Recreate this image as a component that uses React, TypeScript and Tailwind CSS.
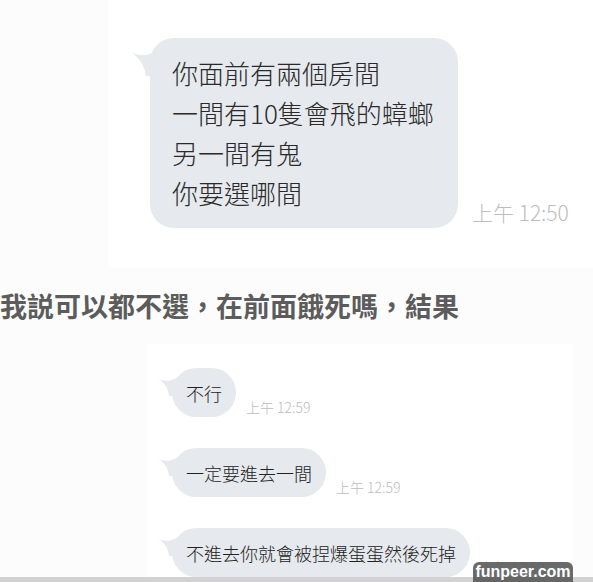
import React from 'react';

const cjk = "font-['Noto_Sans_CJK_TC','Noto_Sans_CJK_SC',sans-serif]";

// 對話框左上角的小尾巴
const Tail = ({ className = '' }: { className?: string }) => (
  <svg
    className={`absolute ${className}`}
    viewBox="0 0 30 30"
    fill="#e6e9ed"
  >
    <path d="M0 4 C8 10 18 12 30 4 L30 30 L18 30 C16 18 10 10 0 4 Z" />
  </svg>
);

const SmallBubble = ({ text, time, stampClass = '' }: { text: string; time: string; stampClass?: string }) => (
  <div className="flex items-end gap-[10px]">
    <div className="relative">
      <Tail className="-left-[16px] top-[6px] w-[22px] h-[22px]" />
      <div className="relative h-[49px] rounded-full bg-[#e6e9ed] px-[14px] flex items-center text-[18px] leading-none font-light text-[#222] whitespace-nowrap">
        {text}
      </div>
    </div>
    <span className={`text-[14px] leading-none font-light text-[#bdbdbd] whitespace-nowrap mb-[3px] ${stampClass}`}>
      {time}
    </span>
  </div>
);

export default function App() {
  return (
    <div className={`relative w-[593px] h-[582px] overflow-hidden bg-[#fcfcfc] flex flex-col ${cjk}`}>
      {/* 第一張截圖 */}
      <div className="ml-[108px] h-[268px] bg-white pl-[42px] pt-[38px]">
        <div className="flex items-end gap-[14px]">
          <div className="relative">
            <Tail className="-left-[22px] top-[8px] w-[30px] h-[30px]" />
            <div className="relative w-[308px] h-[190px] rounded-[24px] bg-[#e6e9ed] pl-[22px] pt-[15px] text-[26px] leading-[40px] font-light text-[#2a2a2a]">
              <div>你面前有兩個房間</div>
              <div>一間有10隻會飛的蟑螂</div>
              <div>另一間有鬼</div>
              <div>你要選哪間</div>
            </div>
          </div>
          <span className="text-[21px] leading-none font-light text-[#bdbdbd] whitespace-nowrap mb-[5px]">上午 12:50</span>
        </div>
      </div>

      {/* 中間說明文字 */}
      <div className="h-[76px] pt-[22px]">
        <h1 className="text-[27px] leading-[32px] font-bold text-[#5c5c5c] whitespace-nowrap">
          我説可以都不選，在前面餓死嗎，結果
        </h1>
      </div>

      {/* 第二張截圖 */}
      <div className="ml-[147px] w-[427px] flex-1 bg-white pl-[25px] pt-[24px] flex flex-col gap-[31px]">
        <SmallBubble text="不行" time="上午 12:59" />
        <SmallBubble text="一定要進去一間" time="上午 12:59" />
        <SmallBubble text="不進去你就會被捏爆蛋蛋然後死掉" time="上午 12:59" stampClass="-mb-[4px]" />
      </div>

      <div className="h-[5px] bg-[#d2d2d2]" />

      {/* 浮水印 */}
      <div className="absolute left-[473px] bottom-0 w-[100px] h-[20px] rounded-t-[6px] bg-[#5a5a5a]/90 flex items-center justify-center font-['Liberation_Sans',sans-serif] font-bold text-[16px] leading-none text-white">
        funpeer.com
      </div>
    </div>
  );
}
